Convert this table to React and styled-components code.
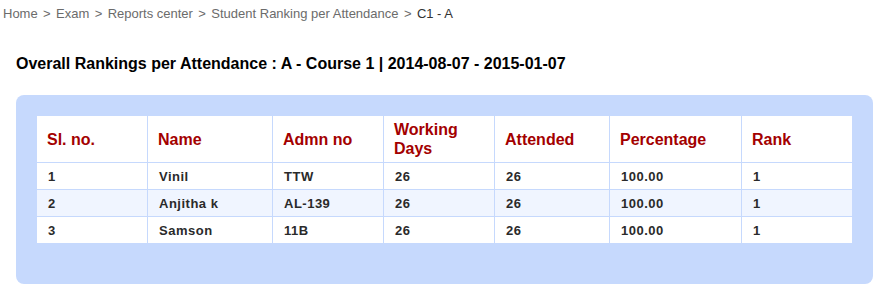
import React from "react";
import styled, { createGlobalStyle } from "styled-components";

const GlobalStyle = createGlobalStyle`
  html, body { margin: 0; padding: 0; background: #ffffff; }
  body { font-family: "Liberation Sans", Arial, sans-serif; }
`;

const Page = styled.div`
  width: 881px;
  height: 290px;
  display: flex;
  flex-direction: column;
`;

const Breadcrumb = styled.nav`
  margin-top: 6px;
  padding-left: 3px;
  font-size: 13px;
  line-height: 15px;
  color: #6b6b6b;
  display: flex;
  gap: 5.4px;
`;

const Crumb = styled.span`
  color: ${(p) => (p.$current ? "#333333" : "#6b6b6b")};
`;

const Title = styled.h2`
  margin: 34px 0 0 16px;
  font-size: 16px;
  line-height: 18px;
  font-weight: bold;
  color: #000;
`;

const Panel = styled.div`
  margin: 22px 0 0 16px;
  width: 817px;
  padding: 20px 20px 40px 20px;
  background: #c6d9fd;
  border-radius: 8px;
`;

const Grid = styled.div`
  display: flex;
  flex-direction: column;
  gap: 1px;
  padding: 1px;
  background: #c6d9fd;
  width: 815px;
`;

const Row = styled.div`
  display: grid;
  grid-template-columns: 110px 124px 110px 110px 114px 131px 110px;
  column-gap: 1px;
  height: ${(p) => (p.$head ? "46px" : "26px")};
`;

const HeadCell = styled.div`
  background: #ffffff;
  display: flex;
  align-items: center;
  padding: 0 10px;
  font-size: 16px;
  line-height: 19px;
  font-weight: bold;
  color: #a30000;
`;

const Cell = styled.div`
  background: ${(p) => (p.$alt ? "#f0f5ff" : "#ffffff")};
  display: flex;
  align-items: center;
  padding: 1px 10px 0 11px;
  font-size: 13px;
  font-weight: bold;
  letter-spacing: 0.5px;
  color: #2a2a2a;
`;

const crumbs = ["Home", "Exam", "Reports center", "Student Ranking per Attendance"];
const headers = ["Sl. no.", "Name", "Admn no", "Working Days", "Attended", "Percentage", "Rank"];
const rows = [
  ["1", "Vinil", "TTW", "26", "26", "100.00", "1"],
  ["2", "Anjitha k", "AL-139", "26", "26", "100.00", "1"],
  ["3", "Samson", "11B", "26", "26", "100.00", "1"],
];

export default function App() {
  return (
    <>
      <GlobalStyle />
      <Page>
        <Breadcrumb>
          {crumbs.map((c) => (
            <React.Fragment key={c}>
              <Crumb>{c}</Crumb>
              <Crumb>&gt;</Crumb>
            </React.Fragment>
          ))}
          <Crumb $current>C1 - A</Crumb>
        </Breadcrumb>
        <Title>Overall Rankings per Attendance : A - Course 1 | 2014-08-07 - 2015-01-07</Title>
        <Panel>
          <Grid>
            <Row $head>
              {headers.map((h) => (
                <HeadCell key={h}>{h}</HeadCell>
              ))}
            </Row>
            {rows.map((r, i) => (
              <Row key={i}>
                {r.map((v, j) => (
                  <Cell key={j} $alt={i % 2 === 1}>
                    {v}
                  </Cell>
                ))}
              </Row>
            ))}
          </Grid>
        </Panel>
      </Page>
    </>
  );
}
